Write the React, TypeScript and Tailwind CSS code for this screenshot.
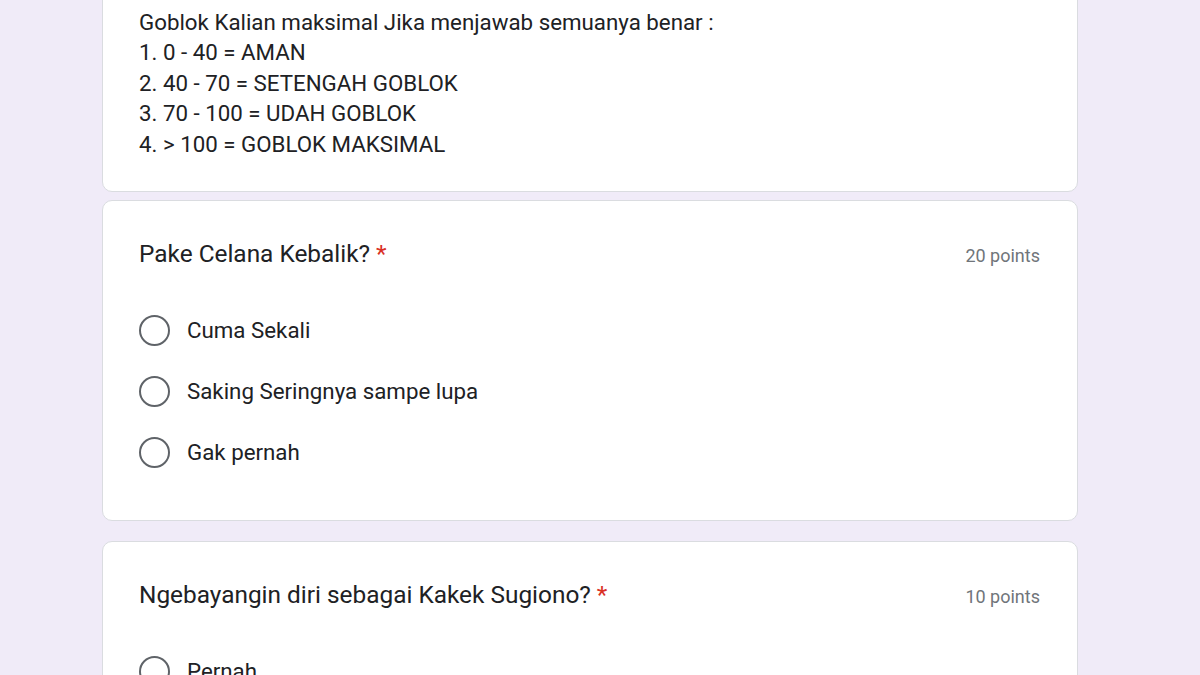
import React from 'react';

const scale = [
  'Goblok Kalian maksimal Jika menjawab semuanya benar :',
  '1. 0 - 40 = AMAN',
  '2. 40 - 70 = SETENGAH GOBLOK',
  '3. 70 - 100 = UDAH GOBLOK',
  '4. > 100 = GOBLOK MAKSIMAL',
];

type Question = {
  title: string;
  points: number;
  options: string[];
};

const questions: Question[] = [
  {
    title: 'Pake Celana Kebalik?',
    points: 20,
    options: ['Cuma Sekali', 'Saking Seringnya sampe lupa', 'Gak pernah'],
  },
  {
    title: 'Ngebayangin diri sebagai Kakek Sugiono?',
    points: 10,
    options: ['Pernah', 'Sering', 'Gak pernah'],
  },
];

function Radio({ label }: { label: string }) {
  return (
    <label className="flex h-[61px] items-center gap-[17px]">
      <span className="h-[31px] w-[31px] shrink-0 rounded-full border-[2.5px] border-[#5f6368]" />
      <span className="text-[22.3px] leading-none text-[#202124]">{label}</span>
    </label>
  );
}

function QuestionCard({ q, className }: { q: Question; className: string }) {
  return (
    <div className={`rounded-[10px] border border-[#dadce0] bg-white pl-[36px] pr-[37px] pt-[37px] pb-[37px] ${className}`}>
      <div className="flex h-[32px] items-center justify-between">
        <div className="text-[24.4px] text-[#202124]">
          {q.title}
          <span className="ml-[6px] text-[#d93025]">*</span>
        </div>
        <div className="pt-[3px] text-[18px] text-[#70757a]">{q.points} points</div>
      </div>
      <div className="mt-[30px] flex flex-col">
        {q.options.map((o) => (
          <Radio key={o} label={o} />
        ))}
      </div>
    </div>
  );
}

export default function App() {
  return (
    <div
      className="h-[675px] overflow-hidden bg-[#f0ebf8]"
      style={{ fontFamily: 'Roboto, "Liberation Sans", sans-serif' }}
    >
      <div className="ml-[102px] w-[976px]">
        <div className="-mt-[40px] rounded-[10px] border border-[#dadce0] bg-white pl-[36px] pt-[46px] pb-[32px]">
          {scale.map((line) => (
            <div key={line} className="h-[30.4px] text-[22.3px] leading-[30.4px] text-[#202124]">
              {line}
            </div>
          ))}
        </div>
        <QuestionCard q={questions[0]} className="mt-[8px]" />
        <QuestionCard q={questions[1]} className="mt-[20px]" />
      </div>
    </div>
  );
}
